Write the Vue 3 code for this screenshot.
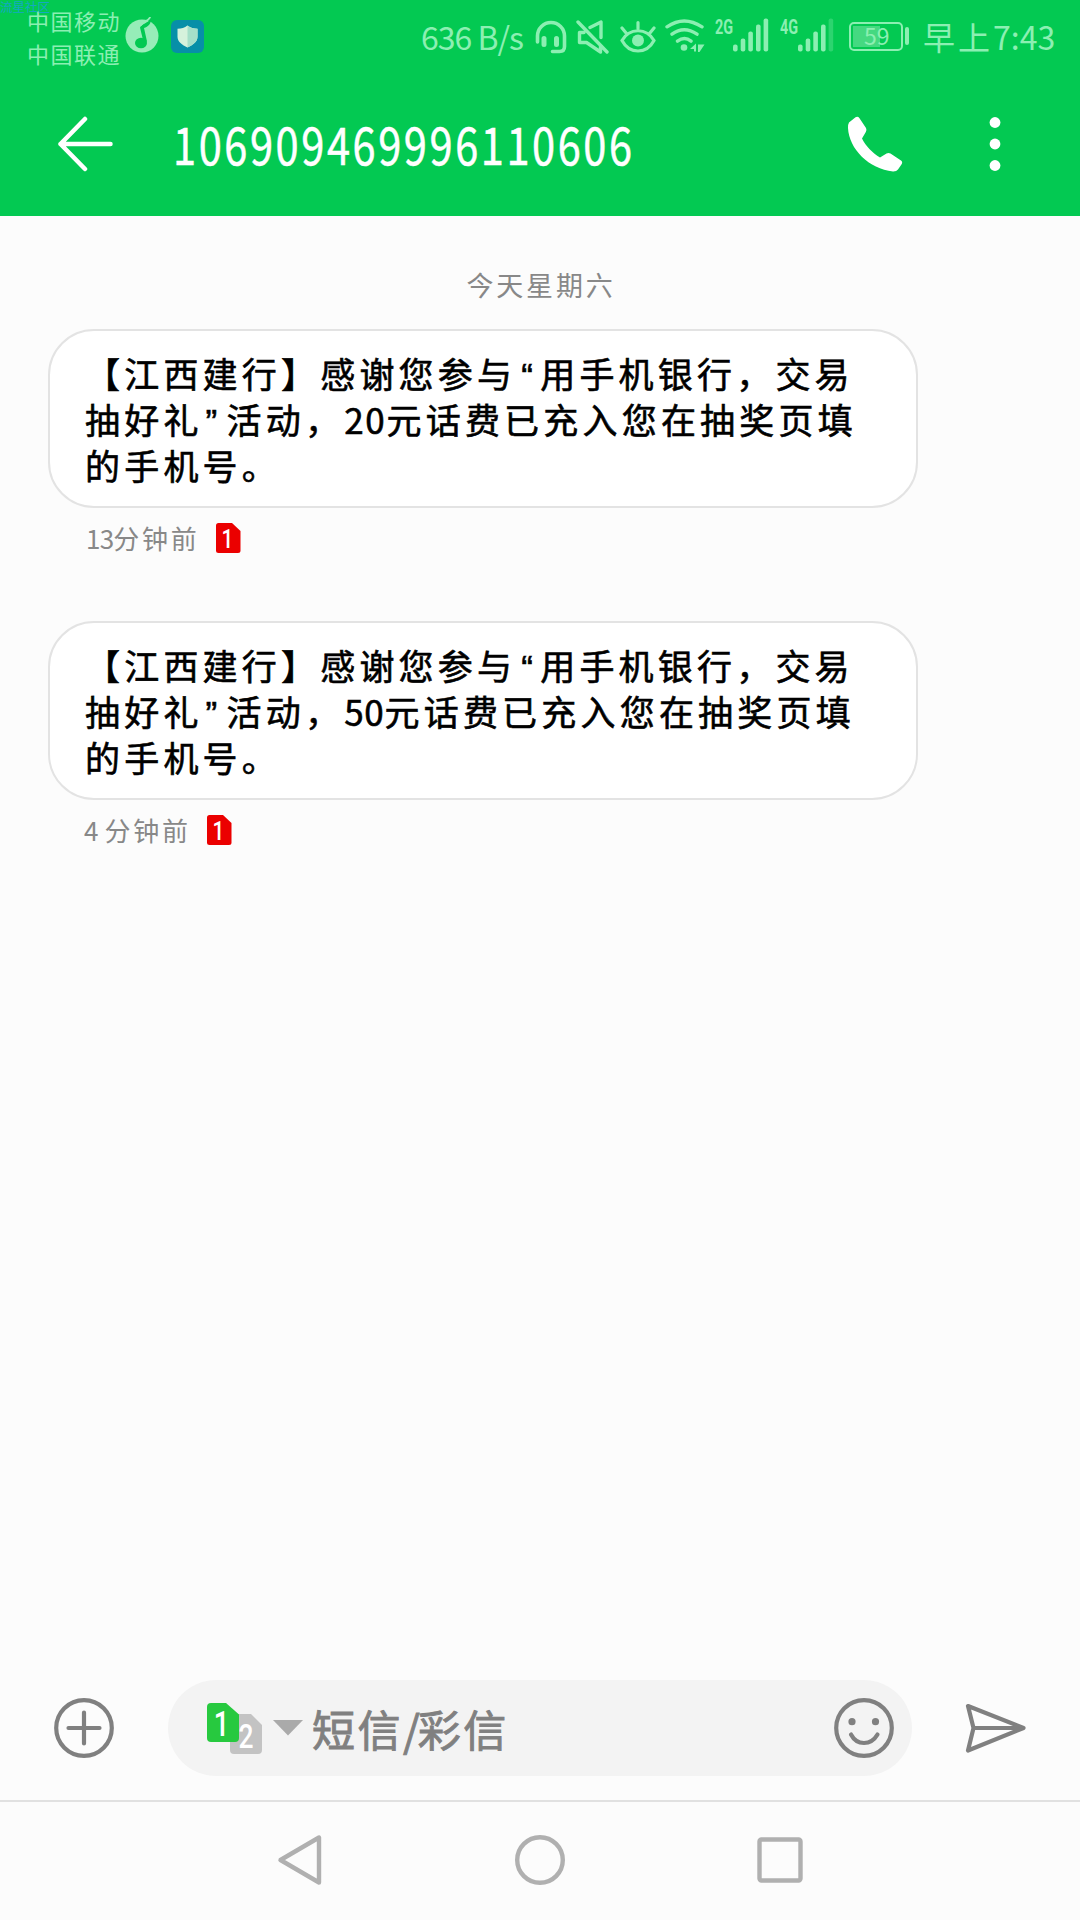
<script setup>
const sender = '106909469996110606';

const messages = [
  { id: 1, amount: '20', minutes: '13', tight: false },
  { id: 2, amount: '50', minutes: '4', tight: true },
];

// x offset and height of each signal bar
const bars = [
  { x: 0, h: 7 },
  { x: 7.7, h: 13 },
  { x: 15.3, h: 20 },
  { x: 23, h: 27 },
  { x: 30.6, h: 33 },
];

const signals = [
  { type: '2G', level: 5 },
  { type: '4G', level: 4 },
];
</script>

<template>
  <div class="screen">
    <header class="top">
      <div class="status">
        <span class="watermark">流星社区</span>
        <div class="carriers">
          <span>中国移动</span>
          <span>中国联通</span>
        </div>
        <svg class="music" width="34" height="36" viewBox="0 0 34 36">
          <circle cx="17" cy="19" r="16.5" fill="#96edb8" />
          <path d="M15 10.500C17.500 6 23 6.500 25.500 1.500c1.200 5.500-2.500 8-6.500 9.500l3 13.500-3.400 1z" fill="#03c952" />
          <path d="M15.500 8.500C18 4.500 23 4.500 25.300 0" fill="none" stroke="#96edb8" stroke-width="1.800" />
          <ellipse cx="16" cy="26" rx="6" ry="5.300" fill="#03c952" />
        </svg>
        <svg class="guard" width="33" height="33" viewBox="0 0 33 33">
          <rect width="33" height="33" rx="6" fill="#078fa8" />
          <path d="M16.500 5.500c3 2.300 6 3 10 3.200v8c0 5-4.600 8.300-10 10.800-5.400-2.500-10-5.800-10-10.800v-8c4-.2 7-.9 10-3.200z" fill="#d5f2dc" />
          <path d="M16.500 5.500c3 2.300 6 3 10 3.200v8c0 5-4.600 8.300-10 10.800z" fill="#a5dfc9" />
        </svg>

        <span class="speed">636 B/s</span>

        <svg class="headset" width="32" height="34" viewBox="0 0 32 34" fill="none" stroke="#8cefb2" stroke-width="3.600" stroke-linecap="round">
          <path d="M2.500 22V16a13.500 13.500 0 0 1 27 0v10.500q0 5-5 5h-7" />
          <path d="M9 18.500v6M21.500 18.500v6" stroke-width="5" />
        </svg>
        <svg class="mute" width="34" height="34" viewBox="0 0 34 34" fill="none" stroke="#8cefb2" stroke-width="3.400" stroke-linecap="round" stroke-linejoin="round">
          <path d="M2 2 31 32M14 7.500 25 2v15.500M8 12.500H3.500v10h7L24.500 32v-6" />
        </svg>
        <svg class="eye" width="36" height="34" viewBox="0 0 36 34" fill="none" stroke="#8cefb2" stroke-width="3.200" stroke-linecap="round">
          <path d="M2 20.500C9.500 7.500 26.500 7.500 34 20.500 26.500 34.500 9.500 34.500 2 20.500zM18 8.500v-6M6.500 13.500 2 8M29.500 13.500 34 8" />
          <circle cx="18" cy="20.500" r="6" fill="#8cefb2" stroke="none" />
        </svg>
        <svg class="wifi" width="40" height="34" viewBox="0 0 40 34" fill="none" stroke="#8cefb2" stroke-width="3.400" stroke-linecap="round">
          <path d="M2 7.800Q19 -4 37 7.800M7 15.200q12-8.800 25 0M12.500 22.200q7-5.200 13.500 0" />
          <circle cx="19" cy="28.500" r="3.300" fill="#8cefb2" stroke="none" />
          <path d="M31 24.500v8h-2v-2.500h-4zM33 25.500h6.500L34.500 33H33z" fill="#8cefb2" stroke="none" />
        </svg>

        <div v-for="s in signals" :key="s.type" class="signal">
          <span class="net">{{ s.type }}</span>
          <svg width="36" height="34" viewBox="0 0 36 34">
            <rect
              v-for="(b, i) in bars"
              :key="i"
              :x="b.x"
              :y="33.500 - b.h"
              width="4.600"
              :height="b.h"
              rx="2"
              fill="#8cefb2"
              :opacity="i < s.level ? 1 : 0.3"
            />
          </svg>
        </div>

        <div class="battery">
          <span class="charge"></span>
          <span class="percent">59</span>
        </div>
        <span class="nub"></span>
        <span class="clock"><span class="day">早上</span>7:43</span>
      </div>

      <div class="bar">
        <svg class="back" width="56" height="56" viewBox="0 0 56 56" fill="none" stroke="#fff" stroke-width="4.500" stroke-linecap="round" stroke-linejoin="round">
          <path d="M28 3 3.500 28 28 53M3.500 28h50" />
        </svg>
        <h1 class="sender">{{ sender }}</h1>
        <svg class="phone" width="56" height="56" viewBox="0 0 56 56">
          <path d="M2 6.500 8.500 1.300Q10.800 0 12.500 2.200L19 12q1 2-.2 4L15 22.500C19 30.500 25.500 37 33 41.500l6.500-4q2-1.200 4 0l10.500 7q2 1.500.6 3.800L51 53.500Q49.500 55.500 46 55.400C22 53 2 33 1 12Q.8 8.500 2 6.500z" fill="#fff" />
        </svg>
        <svg class="more" width="12" height="56" viewBox="0 0 12 56" fill="#fff">
          <circle cx="6" cy="6.500" r="5.400" />
          <circle cx="6" cy="28" r="5.400" />
          <circle cx="6" cy="49.500" r="5.400" />
        </svg>
      </div>
    </header>

    <main class="thread">
      <p class="date">今天星期六</p>
      <section v-for="m in messages" :key="m.id" class="message" :class="{ tight: m.tight }">
        <div class="bubble">
          <div>【江西建行】感谢您参与<span class="quote">“</span>用手机银行，交易</div>
          <div>抽好礼<span class="quote close">”</span>活动，<span class="amount">{{ m.amount }}</span>元话费已充入您在抽奖页填</div>
          <div>的手机号。</div>
        </div>
        <div class="meta">
          <span class="time"><span class="minutes">{{ m.minutes }}</span>分钟前</span>
          <svg width="25" height="30" viewBox="0 0 25 30">
            <path d="M2.500 0H16l8.500 8v19.500q0 2.500-2.500 2.500H2.500Q0 30 0 27.500v-25Q0 0 2.500 0z" fill="#eb0000" />
            <text class="sim-text" transform="translate(11.500 24.500) scale(0.800 1)" font-size="26" text-anchor="middle">1</text>
          </svg>
        </div>
      </section>
    </main>

    <div class="composer">
      <svg class="add" width="60" height="60" viewBox="0 0 60 60" fill="none" stroke="#808080" stroke-width="4.200" stroke-linecap="round">
        <circle cx="30" cy="30" r="27.800" />
        <path d="M14.500 30h31M30 14.500v31" />
      </svg>
      <div class="field">
        <svg class="sims" width="56" height="51" viewBox="0 0 56 51">
          <path d="M27 11h17l11 11v25q0 4-4 4H27q-4 0-4-4V15q0-4 4-4z" fill="#c3c3c3" />
          <text class="sim-text" transform="translate(39 44.500) scale(0.800 1)" font-size="33" text-anchor="middle">2</text>
          <path d="M4 0h15l13 11.500V35q0 4-4 4H4q-4 0-4-4V4q0-4 4-4z" fill="#27c93f" />
          <text class="sim-text" transform="translate(14.500 33) scale(0.780 1)" font-size="35" text-anchor="middle">1</text>
        </svg>
        <svg class="caret" width="30" height="16" viewBox="0 0 30 16">
          <path d="M0 0h30L15 15.500z" fill="#aaa" />
        </svg>
        <span class="hint">短信<i>/</i>彩信</span>
        <svg class="smile" width="60" height="60" viewBox="0 0 60 60" fill="none" stroke="#808080" stroke-width="4.200" stroke-linecap="round">
          <circle cx="30" cy="30" r="27.800" />
          <path d="M17 36.500q4.500 8.500 13 8.500t13.500-8.500" />
          <circle cx="18" cy="23.700" r="3.600" fill="#808080" stroke="none" />
          <circle cx="41.500" cy="23.700" r="3.600" fill="#808080" stroke="none" />
        </svg>
      </div>
      <svg class="send" width="62" height="50" viewBox="0 0 62 50" fill="none" stroke="#808080" stroke-width="4.200" stroke-linejoin="round">
        <path d="M3 3 58.500 25 3 47.500 8.500 25zM8.500 25h50" />
      </svg>
    </div>

    <nav class="nav">
      <svg width="46" height="52" viewBox="0 0 46 52"><path d="M42 3.500v45L3.500 26z" /></svg>
      <svg width="52" height="52" viewBox="0 0 52 52"><circle cx="26" cy="26" r="22.800" /></svg>
      <svg width="46" height="52" viewBox="0 0 46 52"><rect x="2.500" y="5.500" width="41" height="41" rx="2" /></svg>
    </nav>
  </div>
</template>

<style>
body {
  margin: 0;
  background: #fcfcfc;
}
</style>

<style scoped>
.screen {
  width: 1080px;
  height: 1920px;
  display: flex;
  flex-direction: column;
  overflow: hidden;
  background: #fcfcfc;
  font-family: "Noto Sans CJK SC", sans-serif;
}

svg {
  display: block;
  flex: none;
}

.top {
  height: 216px;
  background: #03c952;
}

.status {
  position: relative;
  display: flex;
  align-items: flex-start;
  height: 72px;
  color: #8cefb2;
  white-space: nowrap;
}

.watermark {
  position: absolute;
  left: 0;
  top: 0;
  font-size: 12.500px;
  line-height: 13px;
  color: #14a8c4;
}

.carriers {
  display: flex;
  flex-direction: column;
  width: 94px;
  margin: 4px 0 0 27px;
  font-size: 22px;
  letter-spacing: 1.500px;
  line-height: 33px;
}

.music {
  margin: 17px 0 0 4px;
}

.guard {
  margin: 20px 0 0 12px;
}

.speed {
  width: 114px;
  margin-left: 217px;
  margin-top: 12px;
  font-size: 32px;
  line-height: 48px;
  letter-spacing: -1px;
}

.headset {
  margin-top: 20px;
}

.mute {
  margin: 20px 0 0 9px;
}

.eye {
  margin: 20px 0 0 10px;
}

.wifi {
  margin: 19px 0 0 9px;
}

.signal {
  display: flex;
  margin: 18px 0 0 10px;
}

.signal + .signal {
  margin-left: 11px;
}

.net {
  width: 18px;
  font-family: Roboto, sans-serif;
  font-size: 20px;
  font-weight: 700;
  line-height: 18px;
  transform: scaleX(0.720);
  transform-origin: left;
}

.battery {
  position: relative;
  box-sizing: border-box;
  width: 54px;
  height: 29px;
  margin: 22px 0 0 15px;
  border: 2px solid #8cefb2;
  border-radius: 5px;
}

.charge {
  position: absolute;
  left: 2px;
  top: 2px;
  width: 27px;
  height: 21px;
  background: #45d981;
}

.percent {
  position: absolute;
  left: 13px;
  top: -1px;
  font-size: 23px;
  line-height: 25px;
}

.nub {
  width: 4px;
  height: 18px;
  margin: 27px 0 0 2px;
  border-radius: 2px;
  background: #8cefb2;
}

.clock {
  margin: 12px 0 0 14px;
  font-size: 32px;
  line-height: 48px;
  letter-spacing: 0;
}

.day {
  letter-spacing: 3px;
}

.bar {
  display: flex;
  align-items: center;
  height: 144px;
}

.back {
  margin-left: 57px;
}

.sender {
  width: 671px;
  margin: -3px 0 0 60px;
  font-size: 52px;
  font-weight: 400;
  line-height: 72px;
  letter-spacing: 3.200px;
  color: #fff;
  transform: scaleX(0.800);
  transform-origin: left;
  -webkit-text-stroke: 0.500px #fff;
}

.phone {
  margin-left: 3px;
}

.more {
  margin-left: 86px;
}

.thread {
  flex: 1;
}

.date {
  margin: 49px 0 24px;
  padding-left: 2px;
  font-size: 27px;
  line-height: 40px;
  letter-spacing: 2.800px;
  text-align: center;
  color: #888;
}

.message {
  height: 292px;
  padding-left: 48px;
}

.bubble {
  box-sizing: border-box;
  width: 870px;
  height: 179px;
  padding: 19px 0 0 35px;
  border: 2px solid #e3e3e3;
  border-radius: 46px;
  background: #fff;
  font-size: 35px;
  line-height: 46px;
  letter-spacing: 4.200px;
  white-space: nowrap;
  color: #000;
  -webkit-text-stroke: 0.600px #000;
}

.quote {
  display: inline-block;
  width: 24px;
  font-family: "Liberation Sans", sans-serif;
  line-height: 40px;
  text-indent: 5px;
}

.quote.close {
  text-indent: 3px;
}

.amount {
  letter-spacing: 1.700px;
}

.tight .amount {
  letter-spacing: 0.700px;
}

.meta {
  display: flex;
  align-items: center;
  gap: 16px;
  margin-top: 10px;
  padding-left: 38px;
  height: 40px;
}

.time {
  font-size: 26px;
  line-height: 40px;
  letter-spacing: 2.800px;
  color: #888;
}

.minutes {
  letter-spacing: -0.800px;
}

.tight .meta {
  padding-left: 36px;
}

.tight .minutes {
  letter-spacing: 6px;
}

.sim-text {
  font-family: Roboto, sans-serif;
  font-weight: 500;
  fill: #fff;
}

.composer {
  display: flex;
  align-items: center;
  height: 144px;
  border-bottom: 2px solid #e1e1e1;
}

.add {
  margin-left: 54px;
}

.field {
  box-sizing: border-box;
  display: flex;
  align-items: center;
  width: 744px;
  height: 96px;
  margin-left: 54px;
  padding: 0 18px 0 39px;
  border-radius: 48px;
  background: #f3f3f3;
}

.caret {
  margin-left: 10px;
}

.hint {
  flex: 1;
  margin-left: 9px;
  font-size: 43px;
  line-height: 60px;
  letter-spacing: 2.500px;
  color: #808080;
  -webkit-text-stroke: 0.900px #808080;
}

.hint i {
  font-style: normal;
  letter-spacing: -2px;
}

.send {
  margin-left: 53px;
}

.nav {
  display: flex;
  justify-content: space-between;
  align-items: center;
  box-sizing: border-box;
  height: 118px;
  padding: 0 277px 2px;
}

.nav svg {
  fill: none;
  stroke: #b0b0b0;
  stroke-width: 4.400;
  stroke-linejoin: round;
}
</style>
